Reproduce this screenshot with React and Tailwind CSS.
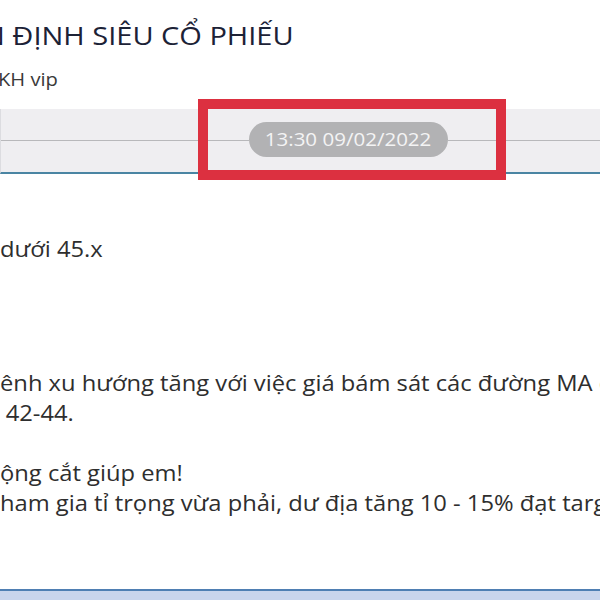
import React from 'react';

const bodyLines = [
  { text: 'ênh xu hướng tăng với việc giá bám sát các đường MA cùng', pad: '' },
  { text: '42-44.', pad: 'pl-[5px]' },
  { text: '\u00a0', pad: '' },
  { text: 'ộng cắt giúp em!', pad: '' },
  { text: 'ham gia tỉ trọng vừa phải, dư địa tăng 10 - 15% đạt target', pad: '' },
];

const App = () => {
  return (
    <div
      className="relative w-[600px] h-[600px] overflow-hidden bg-white flex flex-col"
      style={{ fontFamily: '"Open Sans", "Noto Sans", sans-serif' }}
    >
      {/* header */}
      <div className="pt-[18px] whitespace-nowrap">
        <h1 className="ml-[-17px] origin-left scale-x-[1.16] text-[25px] leading-[34px] text-[#1c2236]">
          N ĐỊNH SIÊU CỔ PHIẾU
        </h1>
        <div className="mt-[15px] ml-[-2px] origin-left scale-x-[1.12] text-[18px] leading-[24px] text-[#3a3a3a]">
          KH vip
        </div>
      </div>

      {/* date separator */}
      <div className="mt-[18px] h-[65px] bg-[#efeef1] border-l border-[#dcdce0] border-b-2 border-b-[#4a85a3] flex items-center">
        <div className="w-[248px] h-px bg-[#b8b8bb]" />
        <div className="w-[199px] h-[35px] rounded-full bg-[#b2b2b4] flex items-center justify-center mb-[2px]">
          <span className="scale-x-[1.14] text-[18px] text-[#f4f4f4]">13:30 09/02/2022</span>
        </div>
        <div className="flex-1 h-px bg-[#b8b8bb]" />
      </div>

      {/* message body */}
      <div className="text-[21px] leading-[30px] text-[#2e2e2e] whitespace-nowrap origin-left scale-x-[1.13]">
        <div className="mt-[60px]">dưới 45.x</div>
        <div className="mt-[104px]">
          {bodyLines.map((line, i) => (
            <div key={i} className={line.pad}>{line.text}</div>
          ))}
        </div>
      </div>

      {/* window edge */}
      <div className="mt-auto h-[11px] border-t-2 border-[#4f7fb3] bg-[#c9d5ec]" />

      {/* highlight box */}
      <div className="absolute left-[198px] top-[99px] w-[308px] h-[81px] border-[10px] border-[#dc3040]" />
    </div>
  );
};

export default App;
